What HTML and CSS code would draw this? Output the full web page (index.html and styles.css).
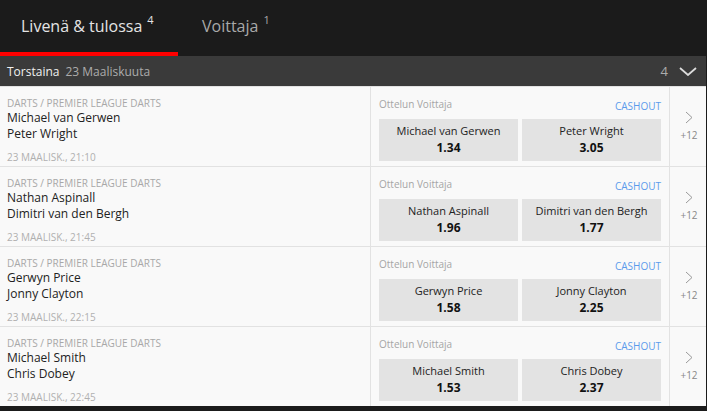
FILE: index.html
```html
<!DOCTYPE html>
<html lang="fi">

<head>
    <meta charset="UTF-8">
    <meta name="viewport" content="width=device-width, initial-scale=1.0">
    <title>Darts</title>
    <link rel="stylesheet" href="styles.css">
</head>

<body>
    <div id="page">
        <ul id="tabs">
            <li class="tab-selected">Livenä &amp; tulossa<sup>4</sup></li>
            <li>Voittaja<sup>1</sup></li>
        </ul>

        <div id="day">
            <span class="day-name">Torstaina</span>
            <span class="day-date">23 Maaliskuuta</span>
            <span class="day-count">4</span>
            <svg class="day-arrow" width="18" height="9" viewBox="0 0 18 9">
                <polyline points="1,1 9,8 17,1" fill="none" stroke="#dcdcdc" stroke-width="1.8"/>
            </svg>
        </div>

        <div class="match">
            <div class="info">
                <div class="league">Darts / Premier League Darts</div>
                <div class="team">Michael van Gerwen</div>
                <div class="team">Peter Wright</div>
                <div class="time">23 Maalisk., 21:10</div>
            </div>
            <div class="market">
                <div class="market-head">
                    <span class="market-name">Ottelun Voittaja</span>
                    <span class="cashout">CASHOUT</span>
                </div>
                <div class="odds">
                    <div class="odd"><span>Michael van Gerwen</span><b>1.34</b></div>
                    <div class="odd"><span>Peter Wright</span><b>3.05</b></div>
                </div>
            </div>
            <div class="more">
                <svg width="8" height="13" viewBox="0 0 8 13"><polyline points="1,1 7,6.5 1,12" fill="none" stroke="#999" stroke-width="1"/></svg>
                <span>+12</span>
            </div>
        </div>

        <div class="match">
            <div class="info">
                <div class="league">Darts / Premier League Darts</div>
                <div class="team">Nathan Aspinall</div>
                <div class="team">Dimitri van den Bergh</div>
                <div class="time">23 Maalisk., 21:45</div>
            </div>
            <div class="market">
                <div class="market-head">
                    <span class="market-name">Ottelun Voittaja</span>
                    <span class="cashout">CASHOUT</span>
                </div>
                <div class="odds">
                    <div class="odd"><span>Nathan Aspinall</span><b>1.96</b></div>
                    <div class="odd"><span>Dimitri van den Bergh</span><b>1.77</b></div>
                </div>
            </div>
            <div class="more">
                <svg width="8" height="13" viewBox="0 0 8 13"><polyline points="1,1 7,6.5 1,12" fill="none" stroke="#999" stroke-width="1"/></svg>
                <span>+12</span>
            </div>
        </div>

        <div class="match">
            <div class="info">
                <div class="league">Darts / Premier League Darts</div>
                <div class="team">Gerwyn Price</div>
                <div class="team">Jonny Clayton</div>
                <div class="time">23 Maalisk., 22:15</div>
            </div>
            <div class="market">
                <div class="market-head">
                    <span class="market-name">Ottelun Voittaja</span>
                    <span class="cashout">CASHOUT</span>
                </div>
                <div class="odds">
                    <div class="odd"><span>Gerwyn Price</span><b>1.58</b></div>
                    <div class="odd"><span>Jonny Clayton</span><b>2.25</b></div>
                </div>
            </div>
            <div class="more">
                <svg width="8" height="13" viewBox="0 0 8 13"><polyline points="1,1 7,6.5 1,12" fill="none" stroke="#999" stroke-width="1"/></svg>
                <span>+12</span>
            </div>
        </div>

        <div class="match">
            <div class="info">
                <div class="league">Darts / Premier League Darts</div>
                <div class="team">Michael Smith</div>
                <div class="team">Chris Dobey</div>
                <div class="time">23 Maalisk., 22:45</div>
            </div>
            <div class="market">
                <div class="market-head">
                    <span class="market-name">Ottelun Voittaja</span>
                    <span class="cashout">CASHOUT</span>
                </div>
                <div class="odds">
                    <div class="odd"><span>Michael Smith</span><b>1.53</b></div>
                    <div class="odd"><span>Chris Dobey</span><b>2.37</b></div>
                </div>
            </div>
            <div class="more">
                <svg width="8" height="13" viewBox="0 0 8 13"><polyline points="1,1 7,6.5 1,12" fill="none" stroke="#999" stroke-width="1"/></svg>
                <span>+12</span>
            </div>
        </div>
    </div>
</body>

</html>
```

FILE: styles.css
```css
* {
    margin: 0;
    padding: 0;
    box-sizing: border-box;
}

body {
    background: #1b1b1b;
    font-family: "Open Sans", "Liberation Sans", sans-serif;
    height: 411px;
    overflow: hidden;
}

#page {
    width: 706px;
}

/* tabs */
#tabs {
    display: flex;
    height: 56px;
    background: #1b1b1b;
    list-style: none;
}

#tabs li {
    height: 56px;
    padding: 14px 24px 0 24px;
    font-size: 16px;
    color: #a9a9a9;
    border-bottom: 4px solid transparent;
}

#tabs li sup {
    font-size: 11px;
    margin-left: 5px;
    position: relative;
    top: -2px;
}

#tabs .tab-selected {
    width: 178px;
    padding-left: 21px;
    color: #e4e4e4;
    border-bottom-color: #ff0000;
}

/* day header */
#day {
    display: flex;
    align-items: center;
    height: 30px;
    padding: 0 9px 0 7px;
    background: #3a3a3a;
    font-size: 12px;
}

.day-name {
    color: #f0f0f0;
    margin-right: 6px;
}

.day-date {
    color: #acacac;
    flex: 1;
}

.day-count {
    color: #acacac;
    font-size: 13px;
    margin-right: 11px;
}

/* match rows */
.match {
    display: flex;
    height: 80px;
    background: #f9f9f9;
    border-top: 1px solid #e2e2e2;
}

.match:first-of-type {
    border-top: none;
}

.info {
    width: 371px;
    padding: 9px 7px 0;
    border-right: 1px solid #e2e2e2;
}

.league {
    font-size: 10px;
    color: #a8a8a8;
    text-transform: uppercase;
    line-height: 14px;
}

.team {
    font-size: 12px;
    color: #222;
    line-height: 16px;
}

.time {
    font-size: 10px;
    color: #b0b0b0;
    text-transform: uppercase;
    margin-top: 8px;
    line-height: 14px;
}

.market {
    width: 299px;
    padding: 10px 8px 0;
    border-right: 1px solid #e2e2e2;
}

.market-head {
    display: flex;
    justify-content: space-between;
    align-items: flex-start;
    height: 22px;
}

.market-name {
    font-size: 10px;
    color: #a5a5a5;
    line-height: 14px;
}

.cashout {
    font-size: 10px;
    color: #5c9bec;
    line-height: 14px;
    margin-top: 2px;
}

.odds {
    display: flex;
    gap: 4px;
}

.odd {
    flex: 1;
    height: 42px;
    background: #e3e3e3;
    display: flex;
    flex-direction: column;
    align-items: center;
    padding-top: 4px;
    cursor: pointer;
}

.odd span {
    font-size: 11px;
    color: #222;
    line-height: 16px;
}

.odd b {
    font-size: 12px;
    color: #111;
    line-height: 18px;
}

.more {
    flex: 1;
    display: flex;
    flex-direction: column;
    align-items: center;
    padding-top: 24px;
    padding-left: 2px;
    font-size: 10px;
    color: #888;
}

.more span {
    margin-top: 4px;
}
```
